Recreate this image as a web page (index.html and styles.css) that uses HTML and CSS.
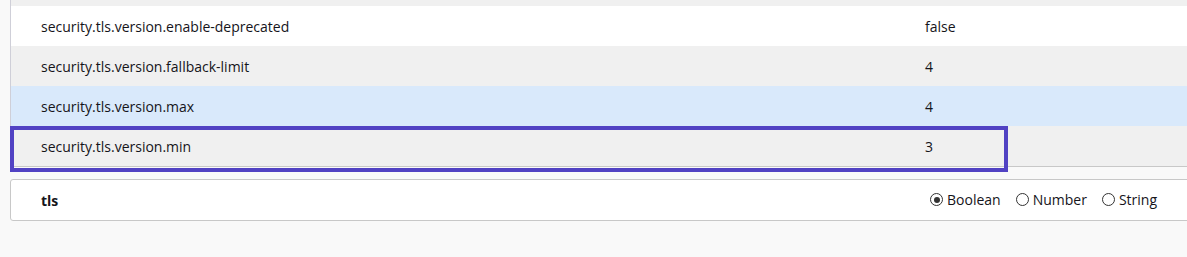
FILE: index.html
```html
<!DOCTYPE html>
<html lang="en">
<head>
    <meta charset="UTF-8">
    <meta name="viewport" content="width=device-width, initial-scale=1.0">
    <title>about:config</title>
    <link rel="stylesheet" href="styles.css">
</head>
<body>

<div class="page">
    <div class="prefs">
        <div class="row gray">
            <div class="name"></div>
            <div class="value"></div>
        </div>
        <div class="row">
            <div class="name">security.tls.version.enable-deprecated</div>
            <div class="value">false</div>
        </div>
        <div class="row gray">
            <div class="name">security.tls.version.fallback-limit</div>
            <div class="value">4</div>
        </div>
        <div class="row selected">
            <div class="name">security.tls.version.max</div>
            <div class="value">4</div>
        </div>
        <div class="row gray last">
            <div class="name">security.tls.version.min</div>
            <div class="value">3</div>
            <span class="highlight"></span>
        </div>
    </div>

    <div class="new-pref">
        <div class="new-name">tls</div>
        <div class="types">
            <label class="radio"><span class="dot checked"></span>Boolean</label>
            <label class="radio"><span class="dot"></span>Number</label>
            <label class="radio"><span class="dot"></span>String</label>
        </div>
    </div>
</div>

</body>
</html>
```

FILE: styles.css
```css
html, body {
    margin: 0;
    overflow: hidden;
}
body {
    background-color: #f9f9f9;
    font-family: "Open Sans", "Noto Sans", sans-serif;
    font-size: 14px;
    color: #15141a;
}
.page {
    padding-left: 10px;
    width: 1200px;
}
.prefs {
    margin-top: -34px;
    border-left: 1px solid #cfcfd8;
    border-bottom: 1px solid #c8c8c8;
    background-color: #ffffff;
}
.row {
    display: grid;
    grid-template-columns: 914px 1fr;
    height: 40px;
    align-items: center;
    background-color: #ffffff;
}
.row.gray {
    background-color: #f0f0f0;
}
.row.selected {
    background-color: #d9e9fb;
}
.row.last {
    position: relative;
}
.name {
    padding-left: 30px;
}
.highlight {
    position: absolute;
    top: 0;
    left: -1px;
    width: 990px;
    height: 38px;
    border: 4px solid #5142c3;
}
.new-pref {
    margin-top: 12px;
    height: 40px;
    display: grid;
    grid-template-columns: 919px 1fr;
    align-items: center;
    background-color: #ffffff;
    border: 1px solid #c8c8c8;
    border-radius: 3px;
}
.new-name {
    padding-left: 30px;
    font-weight: bold;
}
.types {
    display: flex;
    gap: 15px;
    font-size: 14px;
    margin-top: -1px;
}
.radio {
    display: flex;
    align-items: center;
    gap: 4px;
}
.dot {
    width: 11px;
    height: 11px;
    border: 1px solid #333;
    border-radius: 50%;
    position: relative;
}
.dot.checked::after {
    content: "";
    position: absolute;
    top: 2.5px;
    left: 2.5px;
    width: 6px;
    height: 6px;
    border-radius: 50%;
    background-color: #333;
}
```
